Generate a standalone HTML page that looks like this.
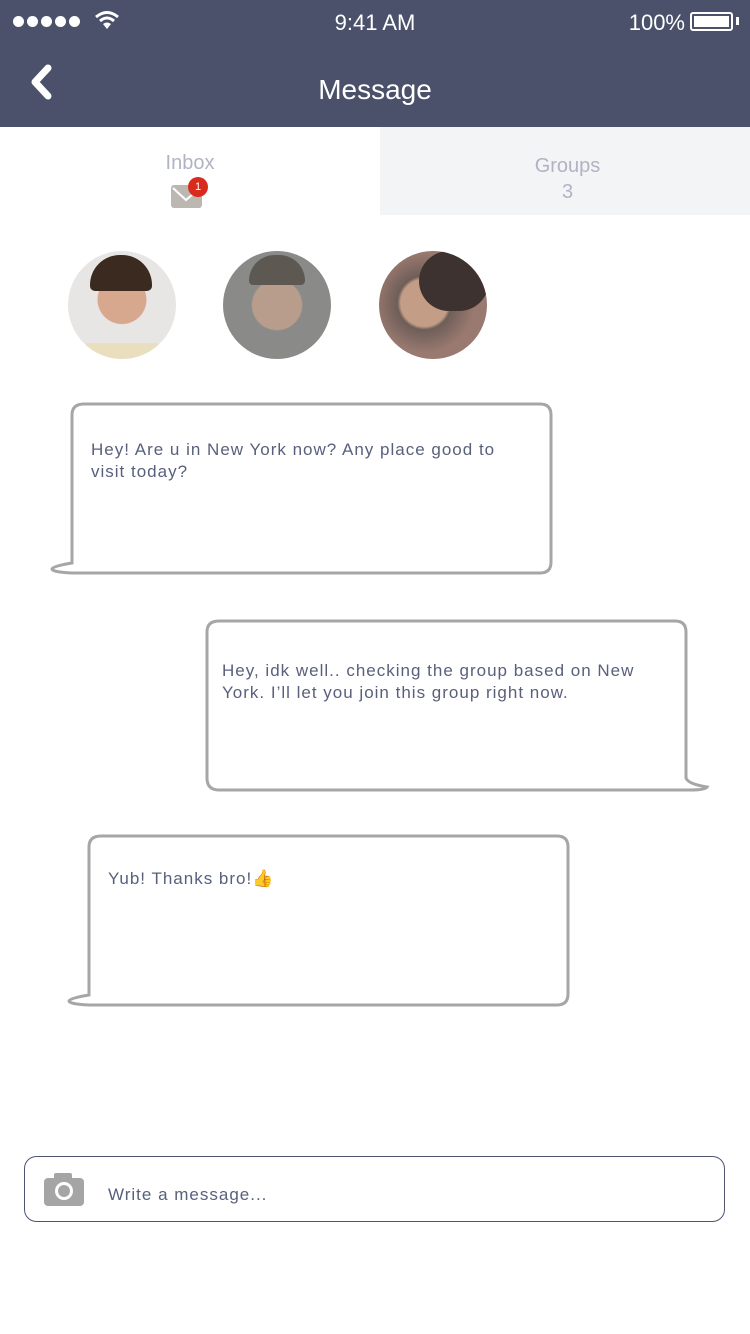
<!DOCTYPE html>
<html><head><meta charset="utf-8"><style>
*{margin:0;padding:0;box-sizing:border-box}
body{width:750px;height:1334px;position:relative;background:#fff;font-family:"Liberation Sans",sans-serif;overflow:hidden}
.hdr{position:absolute;left:0;top:0;width:750px;height:127px;background:#4c516b;color:#fff}
.t{position:absolute;font-size:17px;color:#59607c;letter-spacing:1px;line-height:22px}
.av{position:absolute;top:251px;width:108px;height:108px;border-radius:50%;overflow:hidden}
</style></head><body>
<div class="hdr">
 <div style="position:absolute;left:13px;top:16px;display:flex;gap:3px">
  <i style="width:11px;height:11px;border-radius:50%;background:#fff;display:block"></i><i style="width:11px;height:11px;border-radius:50%;background:#fff;display:block"></i><i style="width:11px;height:11px;border-radius:50%;background:#fff;display:block"></i><i style="width:11px;height:11px;border-radius:50%;background:#fff;display:block"></i><i style="width:11px;height:11px;border-radius:50%;background:#fff;display:block"></i>
 </div>
 <svg style="position:absolute;left:94px;top:10px" width="26" height="20" viewBox="0 0 26 20"><path d="M2 7 Q13 -2 24 7" stroke="#fff" stroke-width="3" fill="none"/><path d="M6 11 Q13 5 20 11" stroke="#fff" stroke-width="3" fill="none"/><path d="M13 19 L9 14 Q13 11 17 14Z" fill="#fff"/></svg>
 <div style="position:absolute;left:0;width:750px;top:10px;text-align:center;font-size:22px">9:41 AM</div>
 <div style="position:absolute;right:65px;top:10px;font-size:22px">100%</div>
 <div style="position:absolute;left:690px;top:12px;width:43px;height:19px;border:2px solid #fff;border-radius:3px;padding:2px"><div style="background:#fff;width:100%;height:100%"></div></div>
 <div style="position:absolute;left:736px;top:17px;width:3px;height:8px;background:#fff"></div>
 <svg style="position:absolute;left:28px;top:64px" width="26" height="36" viewBox="0 0 26 36"><path d="M20 4 L7 18 L20 32" stroke="#fff" stroke-width="7" stroke-linecap="round" stroke-linejoin="round" fill="none"/></svg>
 <div style="position:absolute;left:0;width:750px;top:74px;text-align:center;font-size:28px">Message</div>
</div>
<div style="position:absolute;left:380px;top:127px;width:370px;height:88px;background:#f3f4f6"></div>
<div style="position:absolute;left:0;width:380px;top:152px;text-align:center;font-size:20px;color:#b0b3c3">Inbox</div>
<div style="position:absolute;left:171px;top:185px;width:31px;height:23px;background:#bcb7b1;border-radius:3px"></div>
<svg style="position:absolute;left:171px;top:185px" width="31" height="23"><path d="M2 3 L15 15 L29 3" stroke="#fff" stroke-width="2" fill="none"/></svg>
<div style="position:absolute;left:188px;top:177px;width:20px;height:20px;border-radius:50%;background:#d82b1e;color:#fff;font-size:11px;text-align:center;line-height:20px">1</div>
<div style="position:absolute;left:380px;width:375px;top:153px;text-align:center;font-size:20px;color:#b0b3c3;line-height:26px">Groups<br>3</div>

<div class="av" style="left:68px;background:radial-gradient(circle at 50% 45%,#d8a88e 0 30%,#e8e6e4 31%)"><div style="position:absolute;left:22px;top:4px;width:62px;height:36px;border-radius:30px 30px 5px 5px;background:#3a2a20"></div><div style="position:absolute;left:18px;top:92px;width:72px;height:20px;background:#e9dfbf"></div></div>
<div class="av" style="left:223px;background:radial-gradient(circle at 50% 50%,#b99d8c 0 32%,#8a8a88 34%)"><div style="position:absolute;left:26px;top:4px;width:56px;height:30px;border-radius:30px 30px 5px 5px;background:#5d5852"></div></div>
<div class="av" style="left:379px;background:radial-gradient(circle at 42% 48%,#c49d87 0 28%,#6e5e58 32%,#9a7a70 60%)"><div style="position:absolute;left:40px;top:0;width:70px;height:60px;border-radius:30px;background:#3e3230"></div></div>

<svg style="position:absolute;left:0;top:0" width="750" height="1334">
<g stroke="#a6a6a6" stroke-width="3" fill="none">
<path d="M84 404 H540 Q551 404 551 415 V562 Q551 573 540 573 H72 Q52 572 52 569 Q53 566 72 563 V415 Q72 404 84 404 Z"/>
<path d="M219 621 H675 Q686 621 686 632 V778 Q688 784 707 787 Q705 790 690 790 H219 Q207 790 207 778 V632 Q207 621 219 621 Z"/>
<path d="M101 836 H557 Q568 836 568 847 V994 Q568 1005 557 1005 H89 Q69 1004 69 1001 Q70 998 89 995 V847 Q89 836 101 836 Z"/>
</g>
<rect x="24.5" y="1156.5" width="700" height="65" rx="12" fill="none" stroke="#4f5470" stroke-width="1"/>
<rect x="44" y="1178" width="40" height="28" rx="4" fill="#a5a5a5"/>
<rect x="54" y="1173" width="18" height="8" rx="2" fill="#a5a5a5"/>
<circle cx="64" cy="1191" r="9" fill="#fff"/><circle cx="64" cy="1191" r="6" fill="#a5a5a5"/>
</svg>
<div class="t" style="left:91px;top:439px;width:440px">Hey! Are u in New York now? Any place good to visit today?</div>
<div class="t" style="left:222px;top:660px;width:450px">Hey, idk well.. checking the group based on New York. I’ll let you join this group right now.</div>
<div class="t" style="left:108px;top:868px;width:450px">Yub! Thanks bro!<span style="color:#e9a820">👍</span></div>
<div class="t" style="left:108px;top:1184px">Write a message...</div>
</body></html>
